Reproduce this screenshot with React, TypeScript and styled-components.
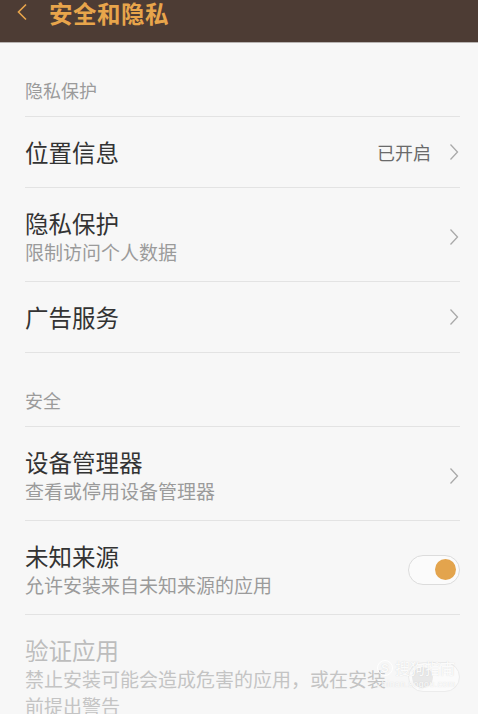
import React from "react";
import styled, { createGlobalStyle } from "styled-components";

const Global = createGlobalStyle`
  html, body { margin: 0; padding: 0; background: #f7f7f7; }
  body { font-family: "Noto Sans CJK SC", "Noto Sans", sans-serif; }
  * { box-sizing: border-box; }
`;

const Page = styled.div`
  position: relative;
  width: 478px;
  height: 714px;
  overflow: hidden;
  background: #f7f7f7;
`;

const Header = styled.header`
  height: 43px;
  background: #4d3c34;
  border-bottom: 1px solid #b8b4b2;
  display: flex;
  align-items: flex-start;
  gap: 21px;
  padding: 0 0 0 16px;
`;

const BackIcon = styled.svg`
  width: 12px;
  height: 18px;
  margin-top: 3px;
`;

const HeaderTitle = styled.h1`
  margin: 0;
  font-size: 23.5px;
  line-height: 26px;
  font-weight: 700;
  color: #e8a54b;
  letter-spacing: 0.5px;
`;

const List = styled.main`
  display: flex;
  flex-direction: column;
  padding: 0 18px 0 25px;
`;

const SectionLabel = styled.div`
  height: 74px;
  padding-bottom: 14px;
  display: flex;
  align-items: flex-end;
  font-size: 18px;
  line-height: 24px;
  color: #9b9b9b;
  border-bottom: 1px solid #e3e3e3;
`;

const Row = styled.div<{ $tall?: boolean; $wide?: boolean }>`
  min-height: ${(p) => (p.$tall ? "94px" : "71px")};
  display: flex;
  align-items: center;
  gap: ${(p) => (p.$wide ? "22px" : "12px")};
  border-bottom: 1px solid #e3e3e3;
  padding: ${(p) => (p.$tall ? "20px 0 16px" : "0")};
`;

const Texts = styled.div`
  flex: 1;
  display: flex;
  flex-direction: column;
  min-width: 0;
`;

const Title = styled.div<{ $disabled?: boolean }>`
  font-size: 23.5px;
  line-height: 30px;
  color: ${(p) => (p.$disabled ? "#bdbdbd" : "#333333")};
`;

const Subtitle = styled.div<{ $disabled?: boolean }>`
  font-size: 19px;
  line-height: 27px;
  color: ${(p) => (p.$disabled ? "#c4c4c4" : "#9b9b9b")};
`;

const Value = styled.span`
  font-size: 18px;
  color: #6a6a6a;
  margin-right: 6px;
`;

const ChevronSvg = styled.svg`
  width: 10px;
  height: 18px;
  flex: none;
  margin-right: 1px;
`;

const Toggle = styled.div<{ $on?: boolean; $disabled?: boolean }>`
  flex: none;
  width: 52px;
  height: 30px;
  border-radius: 15px;
  border: 1.5px solid ${(p) => (p.$disabled ? "#ececec" : "#dcdcdc")};
  background: #fbfbfb;
  display: flex;
  align-items: center;
  justify-content: ${(p) => (p.$on ? "flex-end" : "flex-start")};
  padding: 0 3px;
`;

const Knob = styled.div<{ $on?: boolean; $disabled?: boolean }>`
  width: 21px;
  height: 21px;
  border-radius: 50%;
  background: ${(p) => (p.$on ? "#e3a44d" : p.$disabled ? "#e8e8e8" : "#cccccc")};
`;

const Watermark = styled.div`
  position: absolute;
  left: 377px;
  top: 659px;
  display: flex;
  flex-direction: column;
  align-items: flex-start;
  color: rgba(255, 255, 255, 0.92);
  text-shadow: 0 0 1px rgba(180, 180, 180, 0.5);
  pointer-events: none;
`;

const WmTop = styled.div`
  font-size: 15px;
  line-height: 18px;
  display: flex;
  align-items: center;
  gap: 2px;
`;

const WmBadge = styled.span`
  display: inline-flex;
  align-items: center;
  justify-content: center;
  width: 16px;
  height: 16px;
  border-radius: 50%;
  border: 1.5px solid rgba(255, 255, 255, 0.92);
  font-family: "Liberation Sans", sans-serif;
  font-weight: 700;
  font-size: 11px;
`;

const WmUrl = styled.div`
  font-family: "Liberation Sans", sans-serif;
  font-size: 8.5px;
  letter-spacing: 0.6px;
  line-height: 11px;
  margin-top: 2px;
`;

const Chevron = () => (
  <ChevronSvg viewBox="0 0 10 18">
    <path d="M1.5 1.5 L8.5 9 L1.5 16.5" fill="none" stroke="#a9a9a9" strokeWidth="1.3" />
  </ChevronSvg>
);

export default function App() {
  return (
    <>
      <Global />
      <Page>
        <Header>
          <BackIcon viewBox="0 0 12 18">
            <path d="M10 1.5 L2.5 9 L10 16.5" fill="none" stroke="#e8a54b" strokeWidth="1.6" />
          </BackIcon>
          <HeaderTitle>安全和隐私</HeaderTitle>
        </Header>
        <List>
          <SectionLabel>隐私保护</SectionLabel>
          <Row>
            <Texts>
              <Title>位置信息</Title>
            </Texts>
            <Value>已开启</Value>
            <Chevron />
          </Row>
          <Row $tall>
            <Texts>
              <Title>隐私保护</Title>
              <Subtitle>限制访问个人数据</Subtitle>
            </Texts>
            <Chevron />
          </Row>
          <Row>
            <Texts>
              <Title>广告服务</Title>
            </Texts>
            <Chevron />
          </Row>
          <SectionLabel>安全</SectionLabel>
          <Row $tall>
            <Texts>
              <Title>设备管理器</Title>
              <Subtitle>查看或停用设备管理器</Subtitle>
            </Texts>
            <Chevron />
          </Row>
          <Row $tall $wide>
            <Texts>
              <Title>未知来源</Title>
              <Subtitle>允许安装来自未知来源的应用</Subtitle>
            </Texts>
            <Toggle $on>
              <Knob $on />
            </Toggle>
          </Row>
          <Row $tall $wide>
            <Texts>
              <Title $disabled>验证应用</Title>
              <Subtitle $disabled>禁止安装可能会造成危害的应用，或在安装前提出警告</Subtitle>
            </Texts>
            <Toggle $disabled>
              <Knob $disabled />
            </Toggle>
          </Row>
        </List>
        <Watermark>
          <WmTop>
            <WmBadge>S</WmBadge>
            <span>搜狗指南</span>
          </WmTop>
          <WmUrl>zhinan.sogou.com</WmUrl>
        </Watermark>
      </Page>
    </>
  );
}
